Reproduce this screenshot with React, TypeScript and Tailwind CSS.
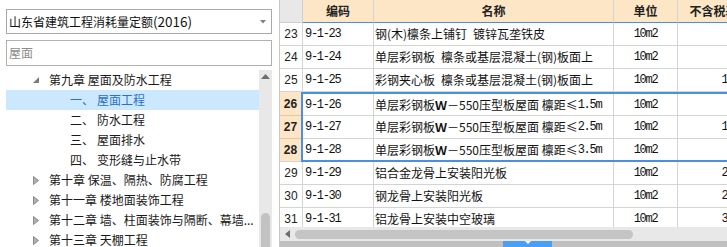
import React from "react";

const cjk = "font-['Noto_Sans_CJK_SC',sans-serif]";
const mono = "font-['Liberation_Mono',monospace] text-[12px] tracking-[-1.3px]";

type Row = { no: number; code: string; name: React.ReactNode; unit: string; price: string };

const rows: Row[] = [
  { no: 23, code: "9-1-23", name: "钢(木)檩条上铺钉\u2002镀锌瓦垄铁皮", unit: "10m2", price: "89.40" },
  { no: 24, code: "9-1-24", name: "单层彩钢板\u2002檩条或基层混凝土(钢)板面上", unit: "10m2", price: "95.27" },
  { no: 25, code: "9-1-25", name: "彩钢夹心板\u2002檩条或基层混凝土(钢)板面上", unit: "10m2", price: "125.62" },
];

const selected: Row[] = [
  { no: 26, code: "9-1-26", name: <>单层彩钢板<b>Ｗ</b>－550压型板屋面 檩距≤<span className={mono}>1.5m</span></>, unit: "10m2", price: "78.45" },
  { no: 27, code: "9-1-27", name: <>单层彩钢板<b>Ｗ</b>－550压型板屋面 檩距≤<span className={mono}>2.5m</span></>, unit: "10m2", price: "112.30" },
  { no: 28, code: "9-1-28", name: <>单层彩钢板<b>Ｗ</b>－550压型板屋面 檩距≤<span className={mono}>3.5m</span></>, unit: "10m2", price: "70.18" },
];

const after: Row[] = [
  { no: 29, code: "9-1-29", name: "铝合金龙骨上安装阳光板", unit: "10m2", price: "256.90" },
  { no: 30, code: "9-1-30", name: "钢龙骨上安装阳光板", unit: "10m2", price: "231.45" },
  { no: 31, code: "9-1-31", name: "铝龙骨上安装中空玻璃", unit: "10m2", price: "318.77" },
];

function DataCells({ r }: { r: Row }) {
  return (
    <>
      <div className={`w-[71px] shrink-0 border-r border-[#d4d4d4] pl-[2px] flex items-center ${mono} text-[#111]`}>{r.code}</div>
      <div className={`w-[240px] shrink-0 border-r border-[#d4d4d4] pl-[1px] flex items-center whitespace-pre text-[12px] text-[#111] ${cjk}`}>{r.name}</div>
      <div className={`w-[64px] shrink-0 border-r border-[#d4d4d4] flex items-center justify-center ${mono} text-[#111]`}>{r.unit}</div>
      <div className={`w-[84px] shrink-0 border-r border-[#d4d4d4] pr-[4px] flex items-center justify-end ${mono} text-[#111]`}>{r.price}</div>
    </>
  );
}

function PlainRow({ r }: { r: Row }) {
  return (
    <div className="flex h-[23px] border-b border-[#d4d4d4] shrink-0">
      <div className="w-[23px] shrink-0 border-r border-[#d4d4d4] flex items-center justify-center font-['Liberation_Sans',sans-serif] text-[12px] text-[#222]">
        {r.no}
      </div>
      <DataCells r={r} />
    </div>
  );
}

function Arrow({ dir }: { dir: "down" | "right" }) {
  if (dir === "down")
    return (
      <svg width="6" height="6" viewBox="0 0 6 6">
        <polygon points="6,0 6,6 0,6" fill="#7a7a7a" />
      </svg>
    );
  return (
    <svg width="6" height="9" viewBox="0 0 6 9">
      <polygon points="0.5,0.5 5.5,4.5 0.5,8.5" fill="#b0b0b0" stroke="#8a8a8a" strokeWidth="1" />
    </svg>
  );
}

function Chapter({ text, open }: { text: string; open?: boolean }) {
  return (
    <div className="flex h-[20px] items-center shrink-0">
      <div className="w-[27px] shrink-0" />
      <div className="w-[16px] shrink-0 flex items-center">
        <Arrow dir={open ? "down" : "right"} />
      </div>
      <span className="whitespace-nowrap text-[#1a1a1a]">{text}</span>
    </div>
  );
}

function Section({ num, text, active }: { num: string; text: string; active?: boolean }) {
  return (
    <div className={`flex h-[20px] items-center shrink-0 ${active ? "bg-[#cce8ff] text-[#2a72c8]" : "text-[#1a1a1a]"}`}>
      <div className="w-[64px] shrink-0" />
      <span className="w-[27px] shrink-0">{num}</span>
      <span className="whitespace-nowrap">{text}</span>
    </div>
  );
}

export default function App() {
  return (
    <div className={`w-[727px] h-[247px] overflow-hidden flex bg-white ${cjk} text-[12px]`}>
      {/* Left: quota tree */}
      <div className="w-[279px] shrink-0 flex flex-col pl-[6px] pr-[7px] pt-[9px]">
        <div className="h-[25px] border border-[#a8a8a8] flex items-center justify-between pl-[2px] pr-[5px] shrink-0">
          <span className="text-[#111] whitespace-nowrap">
            山东省建筑工程消耗量定额<span className="text-[13.5px]">(2016)</span>
          </span>
          <svg width="6" height="4" viewBox="0 0 6 4">
            <polygon points="0,0 6,0 3,3.5" fill="#808080" />
          </svg>
        </div>
        <div className="h-[26px] mt-[6px] border border-[#b0b0b0] flex items-center pl-[2px] text-[#8c8c8c] shrink-0">屋面</div>
        <div className="flex-1 mt-[4px] flex min-h-0">
          <div className="flex-1 flex flex-col overflow-hidden">
            <Chapter text="第九章 屋面及防水工程" open />
            <Section num="一、" text="屋面工程" active />
            <Section num="二、" text="防水工程" />
            <Section num="三、" text="屋面排水" />
            <Section num="四、" text="变形缝与止水带" />
            <Chapter text="第十章 保温、隔热、防腐工程" />
            <Chapter text="第十一章 楼地面装饰工程" />
            <Chapter text="第十二章 墙、柱面装饰与隔断、幕墙..." />
            <Chapter text="第十三章 天棚工程" />
          </div>
          <div className="w-[13px] shrink-0 bg-[#e8e8e8] flex flex-col items-center">
            <svg className="mt-[4px]" width="9" height="5" viewBox="0 0 9 5">
              <polygon points="0,5 9,5 4.5,0" fill="#6e6e6e" />
            </svg>
            <div className="flex-1" />
            <div className="w-[9px] h-[42px] rounded-full bg-[#c2c2c2] -mb-[8px]" />
          </div>
        </div>
      </div>

      {/* Right: quota grid */}
      <div className="flex-1 min-w-0 border-l border-[#c8c8c8] flex flex-col">
        <div className="h-[227px] overflow-hidden flex flex-col">
          {/* header */}
          <div className="flex h-[23px] shrink-0 font-bold text-[12px] text-[#222]">
            <div className="w-[23px] shrink-0 bg-[#e8e8e8] border-r border-b border-[#cfcfcf]" />
            <div className="w-[71px] shrink-0 bg-[#fde6c6] border-r border-[#d4d4d4] border-b border-b-[#4a90e2] flex items-center justify-center">编码</div>
            <div className="w-[240px] shrink-0 bg-[#fde6c6] border-r border-[#d4d4d4] border-b border-b-[#4a90e2] flex items-center justify-center">名称</div>
            <div className="w-[64px] shrink-0 bg-[#fde6c6] border-r border-[#d4d4d4] border-b border-b-[#4a90e2] flex items-center justify-center">单位</div>
            <div className="w-[84px] shrink-0 bg-[#fde6c6] border-r border-[#d4d4d4] border-b border-b-[#4a90e2] flex items-center justify-center whitespace-nowrap">不含税基价</div>
          </div>

          {rows.map((r) => (
            <PlainRow key={r.no} r={r} />
          ))}

          {/* selected block */}
          <div className="flex shrink-0">
            <div className="w-[21px] shrink-0 flex flex-col font-['Liberation_Sans',sans-serif] font-bold text-[12px] text-[#222]">
              <div className="h-[24px] bg-[#fde6c6] border-b border-[#e0c8a8] flex items-center justify-center">26</div>
              <div className="h-[23px] bg-[#fde6c6] border-b border-[#e0c8a8] flex items-center justify-center">27</div>
              <div className="h-[23px] bg-[#fde6c6] border-b border-[#d4d4d4] flex items-center justify-center">28</div>
            </div>
            <div className="border-2 border-[#4a90e2] flex flex-col">
              <div className="flex h-[22px] border-b border-[#d4d4d4]">
                <DataCells r={selected[0]} />
              </div>
              <div className="flex h-[23px] border-b border-[#d4d4d4]">
                <DataCells r={selected[1]} />
              </div>
              <div className="flex h-[21px]">
                <DataCells r={selected[2]} />
              </div>
            </div>
          </div>

          {after.map((r) => (
            <PlainRow key={r.no} r={r} />
          ))}
        </div>

        {/* horizontal scrollbar */}
        <div className="h-[14px] shrink-0 bg-[#e8e8e8] flex items-center">
          <div className="w-[14px] shrink-0 flex items-center justify-center">
            <svg width="5" height="8" viewBox="0 0 5 8">
              <polygon points="5,0 5,8 0,4" fill="#6e6e6e" />
            </svg>
          </div>
          <div className="w-[338px] h-[9px] rounded-full bg-[#c4c4c4] ml-[1px]" />
        </div>
        <div className="h-[6px] shrink-0 bg-[#c0c0c0] flex">
          <div className="w-[223px] shrink-0" />
          <div className="w-[49px] shrink-0 bg-[#4a9ff5] flex justify-center">
            <svg width="6" height="3" viewBox="0 0 6 3">
              <polygon points="0,0 6,0 3,3" fill="#ffffff" />
            </svg>
          </div>
        </div>
      </div>
    </div>
  );
}
